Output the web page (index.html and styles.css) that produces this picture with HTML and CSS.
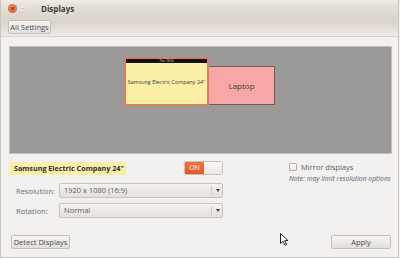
FILE: index.html
```html
<!DOCTYPE html>
<html lang="en">
<head>
  <meta charset="UTF-8">
  <title>Displays</title>
  <link rel="stylesheet" href="styles.css">
</head>
<body>
  <div class="window">
    <header class="chrome">
      <div class="titlebar">
        <span class="wbtn close">×</span>
        <span class="wbtn minimize">–</span>
        <span class="title">Displays</span>
      </div>
      <div class="toolbar">
        <button class="btn">All Settings</button>
      </div>
    </header>

    <main class="content">
      <!-- Arrangement of the monitors -->
      <div class="canvas">
        <div class="monitor samsung">
          <div class="panel-bar">Thu 18:54</div>
          <span>Samsung Electric Company 24"</span>
        </div>
        <div class="monitor laptop">Laptop</div>
      </div>

      <div class="settings">
        <div class="left">
          <div class="row">
            <span class="name">Samsung Electric Company 24"</span>
            <span class="switch"><span class="on">ON</span><span class="off"></span></span>
          </div>
          <div class="row field">
            <label>Resolution:</label>
            <div class="combo">1920 x 1080 (16:9)<span class="arrow"></span></div>
          </div>
          <div class="row field">
            <label>Rotation:</label>
            <div class="combo">Normal<span class="arrow"></span></div>
          </div>
        </div>
        <div class="right">
          <label class="check"><span class="box"></span>Mirror displays</label>
          <p class="note">Note: may limit resolution options</p>
        </div>
      </div>

      <div class="actions">
        <button class="btn">Detect Displays</button>
        <button class="btn apply">Apply</button>
      </div>
    </main>

    <svg class="cursor" width="9" height="13" viewBox="0 0 9 13">
      <path d="M0.5 0.5 L0.5 10.5 L3 8.2 L5 12.3 L6.6 11.5 L4.7 7.6 L8 7.6 Z" fill="#fff" stroke="#222" stroke-width="1"/>
    </svg>
  </div>
</body>
</html>
```

FILE: styles.css
```css
* {
  margin: 0;
  padding: 0;
  box-sizing: border-box;
}

body {
  font-family: "Open Sans", "DejaVu Sans", sans-serif;
  font-size: 7.5px;
  color: #4c4c4c;
  background-color: #f2f1f0;
}

.window {
  position: relative;
  width: 399px;
  height: 258px;
  background-color: #f2f1f0;
  border-left: 1px solid #c9c5bf;
  border-right: 1px solid #c9c5bf;
  border-bottom: 1px solid #c9c5bf;
  display: flex;
  flex-direction: column;
}

/* Title bar + toolbar */
.chrome {
  height: 37px;
  background: linear-gradient(#efede9 0, #e4dfd8 6px, #dad3ca 22px, #e6e2dc 30px, #eeece8 36px);
  border-bottom: 1px solid #d9d2ca;
}

.titlebar {
  height: 17px;
  display: flex;
  align-items: center;
  padding-left: 7px;
}

.wbtn {
  width: 9px;
  height: 9px;
  border-radius: 50%;
  font-size: 7px;
  line-height: 9px;
  text-align: center;
  margin-right: 1px;
}

.close {
  background: radial-gradient(circle at 50% 35%, #f08a60, #dd5a2c);
  color: #5a2a18;
  font-weight: bold;
}

.minimize {
  background: radial-gradient(circle at 50% 35%, #f4f2ef, #cfcac3);
  color: #8a857f;
  font-size: 6px;
}

.title {
  margin-left: 13px;
  font-weight: bold;
  font-size: 8px;
  color: #3c3b37;
}

.toolbar {
  padding: 3px 0 0 7px;
}

.btn {
  font-family: inherit;
  font-size: 7.5px;
  color: #4c4c4c;
  height: 14px;
  padding: 0;
  white-space: nowrap;
  border: 1px solid #c4bfb8;
  border-radius: 2px;
  background: linear-gradient(#f6f5f3, #e2dfda);
}

.toolbar .btn {
  width: 43px;
  height: 14px;
}

/* Content */
.content {
  flex: 1;
  padding: 9px 6px 0 8px;
  display: flex;
  flex-direction: column;
}

.canvas {
  position: relative;
  height: 108px;
  background-color: #9c9a98;
  border: 1px solid #c2c0bd;
}

.monitor {
  position: absolute;
  display: flex;
  align-items: center;
  justify-content: center;
}

.samsung {
  left: 114px;
  top: 10px;
  width: 85px;
  height: 49px;
  background-color: #fcefa6;
  border: 2px solid #d5805e;
  font-size: 5.4px;
  color: #3a3a3a;
  white-space: nowrap;
  z-index: 1;
}

.panel-bar {
  position: absolute;
  top: 0;
  left: 0;
  right: 0;
  height: 4px;
  background-color: #111;
  color: #ddd;
  font-size: 3px;
  line-height: 4px;
  text-align: center;
}

.laptop {
  left: 198px;
  top: 19px;
  width: 67px;
  height: 39px;
  background-color: #f7a7a5;
  border: 1px solid #6f5c5a;
  font-size: 8px;
  color: #3a3a3a;
}

.settings {
  display: flex;
  margin-top: 7px;
}

.left {
  width: 214px;
  display: flex;
  flex-direction: column;
  gap: 8px;
}

.row {
  display: flex;
  align-items: center;
  justify-content: space-between;
  height: 14px;
}

.field {
  height: 15px;
}

.field + .field {
  margin-top: -3px;
}

.name {
  background-color: #fbeeaa;
  font-weight: bold;
  color: #2e2e2e;
  width: 117px;
  height: 13px;
  line-height: 13px;
  padding-left: 5px;
  font-size: 7.2px;
}

.switch {
  display: flex;
  width: 39px;
  height: 14px;
  border: 1px solid #c7c2bb;
  border-radius: 2px;
  overflow: hidden;
}

.switch .on {
  width: 19px;
  background: linear-gradient(#f07446, #e0582a);
  color: #fff;
  text-align: center;
  line-height: 12px;
  font-size: 7px;
}

.switch .off {
  flex: 1;
  background: linear-gradient(#fbfbfa, #e9e7e3);
}

.field label {
  padding-left: 7px;
  color: #6d6d6d;
}

.combo {
  position: relative;
  width: 164px;
  height: 15px;
  line-height: 13px;
  padding-left: 4px;
  border: 1px solid #c8c3bc;
  border-radius: 2px;
  background: linear-gradient(#f4f3f1, #e3e0dc);
  color: #5a5a5a;
}

.arrow {
  position: absolute;
  right: 0;
  top: 2px;
  width: 11px;
  height: 9px;
  border-left: 1px solid #d0ccc6;
}

.arrow::after {
  content: "";
  position: absolute;
  left: 4px;
  top: 3px;
  border-left: 2px solid transparent;
  border-right: 2px solid transparent;
  border-top: 3px solid #3c3c3c;
}

.right {
  margin-left: 66px;
  padding-top: 1px;
}

.check {
  display: flex;
  align-items: center;
  gap: 4px;
  color: #5a5a5a;
}

.box {
  width: 8px;
  height: 8px;
  border: 1px solid #b3aea7;
  border-radius: 1px;
  background: linear-gradient(#fff, #ebe9e6);
}

.note {
  margin-top: 2px;
  font-style: italic;
  font-size: 6.8px;
  color: #55606e;
}

.actions {
  display: flex;
  justify-content: space-between;
  margin-top: 17px;
  padding: 0 1px 0 2px;
}

.actions .btn {
  width: 59px;
}

.actions .apply {
  width: 60px;
}

.cursor {
  position: absolute;
  left: 279px;
  top: 233px;
}
```
